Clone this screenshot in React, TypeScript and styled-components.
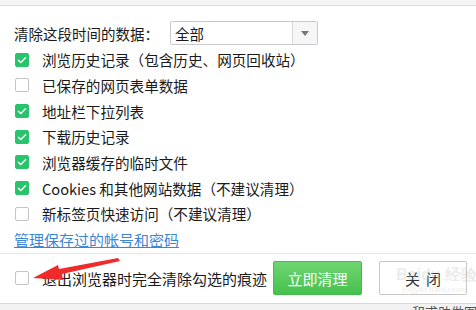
import styled, { createGlobalStyle } from "styled-components";

const Global = createGlobalStyle`
  html, body { margin: 0; padding: 0; background: #fff; }
  body { font-family: "Microsoft YaHei", "Noto Sans CJK SC", "Noto Sans", sans-serif; }
`;

const Frame = styled.div`
  position: relative;
  width: 476px;
  height: 310px;
  overflow: hidden;
  display: flex;
  flex-direction: column;
  background: #fff;
  color: #1a1a1a;
  & > * { flex-shrink: 0; }
`;

const TopStrip = styled.div`
  height: 5px;
  background: #f5f5f5;
  border-bottom: 1px solid #dcdcdc;
`;

const Body = styled.div`
  padding: 15px 0 0 14px;
  display: flex;
  flex-direction: column;
`;

const RangeRow = styled.div`
  display: flex;
  align-items: center;
  height: 24px;
  font-size: 14.5px;
`;

const RangeLabel = styled.span`
  width: 156px;
`;

const Select = styled.div`
  width: 146px;
  height: 22px;
  border: 1px solid #c8c8d0;
  border-radius: 2px;
  display: flex;
  align-items: stretch;
`;

const SelectValue = styled.div`
  flex: 1;
  display: flex;
  align-items: center;
  padding-left: 4px;
`;

const SelectArrow = styled.div`
  width: 24px;
  border-left: 1px solid #d8d8d8;
  background: #f6f6f6;
  display: flex;
  align-items: center;
  justify-content: center;
  &::after {
    content: "";
    border-left: 4px solid transparent;
    border-right: 4px solid transparent;
    border-top: 5px solid #777;
  }
`;

const List = styled.div`
  margin-top: 2px;
  display: flex;
  flex-direction: column;
`;

const Row = styled.div`
  height: 25.67px;
  display: flex;
  align-items: center;
  font-size: 14.6px;
  white-space: nowrap;
`;

const Box = styled.span<{ $on?: boolean }>`
  box-sizing: border-box;
  width: 14px;
  height: 14px;
  margin: 0 13px 0 1px;
  border-radius: 2px;
  border: 1px solid ${({ $on }) => ($on ? "#27c46c" : "#c4c4c4")};
  background: ${({ $on }) => ($on ? "#27c46c" : "#fff")};
  display: flex;
  align-items: center;
  justify-content: center;
  flex-shrink: 0;
`;

const Link = styled.a`
  height: 26px;
  display: flex;
  align-items: center;
  font-size: 15px;
  color: #3c86d8;
  text-decoration: underline;
`;

const Footer = styled.div`
  height: 49px;
  border-top: 1px solid #e6e6e6;
  display: flex;
  align-items: center;
  padding-left: 14px;
  font-size: 15px;
`;

const FooterLabel = styled.span`
  width: 231px;
  white-space: nowrap;
`;

const Button = styled.div<{ $primary?: boolean }>`
  box-sizing: border-box;
  height: 34px;
  width: ${({ $primary }) => ($primary ? "89px" : "88px")};
  margin-right: ${({ $primary }) => ($primary ? "17px" : "0")};
  border-radius: 2px;
  display: flex;
  align-items: center;
  justify-content: center;
  font-size: 15px;
  color: ${({ $primary }) => ($primary ? "#fff" : "#333")};
  background: ${({ $primary }) =>
    $primary ? "linear-gradient(#6fd570, #45c24f)" : "#fff"};
  border: 1px solid ${({ $primary }) => ($primary ? "#44bb4c" : "#c8c8c8")};
  letter-spacing: ${({ $primary }) => ($primary ? "0" : "6px")};
  padding-left: ${({ $primary }) => ($primary ? "0" : "6px")};
`;

const BottomStrip = styled.div`
  flex: 1 1 0;
  min-height: 0;
  overflow: hidden;
  background: #f2f2f2;
  border-top: 1px solid #d8d8d8;
  font-size: 13px;
  color: #555;
  padding-left: 412px;
  line-height: 16px;
  white-space: nowrap;
`;

const Arrow = styled.svg`
  position: absolute;
  left: 28px;
  top: 255px;
`;

const Watermark = styled.div`
  position: absolute;
  left: 396px;
  top: 266px;
  white-space: nowrap;
  color: rgba(190, 190, 190, 0.3);
  font-family: "Liberation Sans", Arial, sans-serif;
  font-weight: bold;
  font-size: 16px;
  line-height: 17px;
`;

const WatermarkSub = styled.div`
  font-size: 8px;
  font-weight: normal;
  line-height: 9px;
  margin-left: 6px;
  margin-top: 2px;
`;

function Check() {
  return (
    <svg width="10" height="8" viewBox="0 0 10 8">
      <path d="M1 4 L3.8 6.6 L9 1.2" fill="none" stroke="#fff" strokeWidth="1.4" />
    </svg>
  );
}

const items: [string, boolean][] = [
  ["浏览历史记录（包含历史、网页回收站）", true],
  ["已保存的网页表单数据", false],
  ["地址栏下拉列表", true],
  ["下载历史记录", true],
  ["浏览器缓存的临时文件", true],
  ["Cookies 和其他网站数据（不建议清理）", true],
  ["新标签页快速访问（不建议清理）", false],
];

export default function App() {
  return (
    <>
      <Global />
      <Frame>
        <TopStrip />
        <Body>
          <RangeRow>
            <RangeLabel>清除这段时间的数据：</RangeLabel>
            <Select>
              <SelectValue>全部</SelectValue>
              <SelectArrow />
            </Select>
          </RangeRow>
          <List>
            {items.map(([text, on]) => (
              <Row key={text}>
                <Box $on={on}>{on && <Check />}</Box>
                {text}
              </Row>
            ))}
          </List>
          <Link>管理保存过的帐号和密码</Link>
        </Body>
        <Footer>
          <Box />
          <FooterLabel>退出浏览器时完全清除勾选的痕迹</FooterLabel>
          <Button $primary>立即清理</Button>
          <Button>关闭</Button>
        </Footer>
        <BottomStrip>和求助做图</BottomStrip>
        <Watermark>
          Baidu 经验
          <WatermarkSub>jingyan.baidu.com</WatermarkSub>
        </Watermark>
        <Arrow width="95" height="30" viewBox="0 0 95 30">
          <path
            d="M5 23 L30 10 L31 14 L90 3 L92 6 L34 19 L35 25 Z"
            fill="#ef2b2b"
          />
        </Arrow>
      </Frame>
    </>
  );
}
